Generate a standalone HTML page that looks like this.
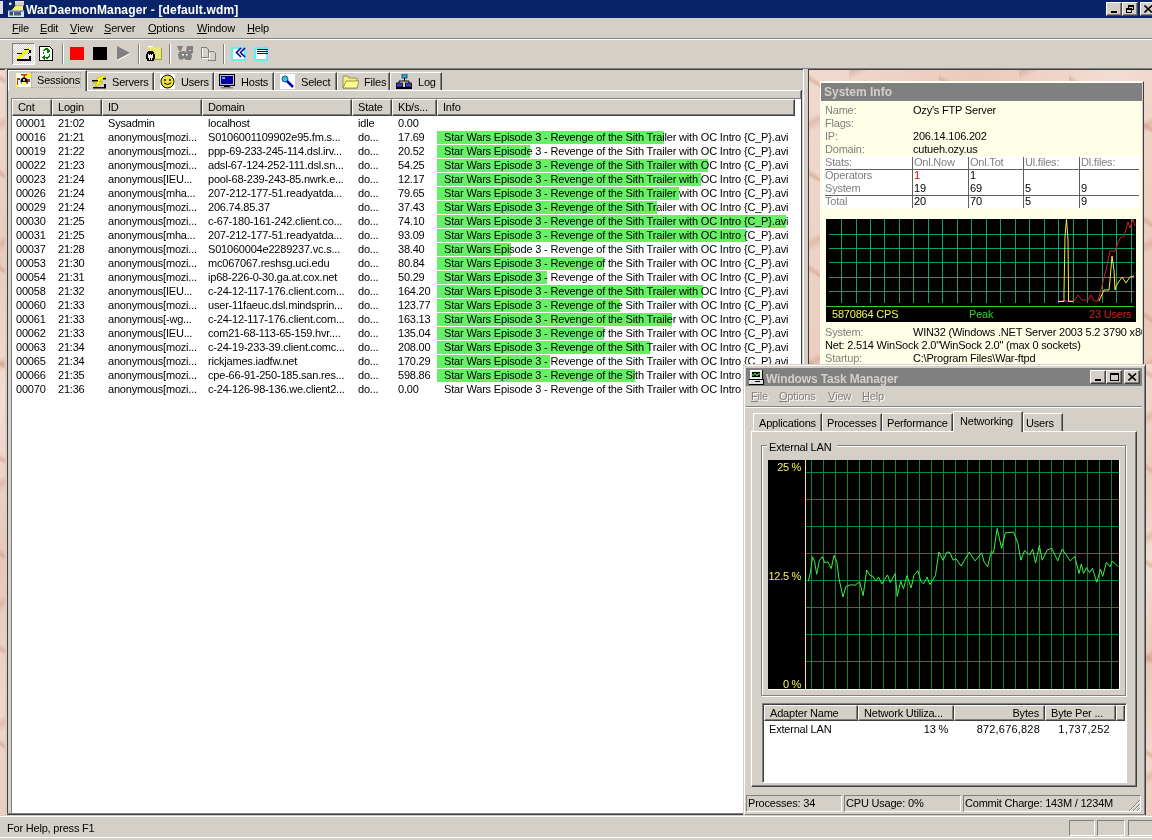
<!DOCTYPE html>
<html><head><meta charset="utf-8"><style>
html,body{margin:0;padding:0}
body{width:1152px;height:840px;position:relative;overflow:hidden;background:#d4d0c8;font:11px "Liberation Sans",sans-serif;color:#000}
div{position:absolute;box-sizing:border-box}
.t{white-space:nowrap;line-height:13px;letter-spacing:-0.2px;will-change:transform}
u{text-decoration:none;border-bottom:1px solid currentColor;line-height:10px;display:inline-block}
.pink{background:linear-gradient(32deg,transparent 47%,rgba(200,140,120,.45) 49%,transparent 52%) 0 0/130px 95px,linear-gradient(152deg,transparent 46%,rgba(200,140,120,.35) 49%,transparent 53%) 40px 20px/170px 120px,linear-gradient(115deg,#f2dacf 0%,#ebcabb 25%,#f3ddd2 45%,#e9c6b6 65%,#f1d6ca 85%,#ecccbe 100%)}
.raised{border-top:1px solid #fff;border-left:1px solid #fff;border-right:1px solid #404040;border-bottom:1px solid #404040;box-shadow:inset -1px -1px 0 #808080}
.hdr{background:#d4d0c8;border-top:1px solid #fff;border-left:1px solid #fff;border-right:1px solid #404040;border-bottom:1px solid #404040;box-shadow:inset -1px -1px 0 #808080}
</style></head><body>

<div style="left:0px;top:0px;width:1152px;height:18px;background:#0a246a"></div>
<div style="left:0px;top:1px;width:3px;height:13px;background:#e4dcdc"></div>
<svg style="position:absolute;left:8px;top:1px" width="16" height="16" viewBox="0 0 16 16"><rect x="7" y="0" width="9" height="4.5" fill="#d0d0c8"/><rect x="7" y="0" width="9" height="1" fill="#e8e8e0"/><polygon points="3,9.5 7,4.5 15,4.5 15,9.5" fill="#f0f070"/><path d="M7 4.5L3 9.5" stroke="#101830" stroke-width="1"/><rect x="0" y="9.5" width="16" height="6.5" fill="#d0e4f4"/><rect x="1" y="10" width="14" height="1" fill="#8080c0"/><rect x="1.5" y="11" width="3.5" height="3.5" fill="#405060"/><rect x="6" y="11" width="7" height="3.5" fill="#506070"/><circle cx="2.3" cy="2.8" r="1.4" fill="#fff"/></svg>
<div class="t" style="left:26px;top:4px;color:#fff;font-weight:bold;font-size:12px;letter-spacing:0.15px">WarDaemonManager - [default.wdm]</div>
<div style="left:1106px;top:2px;width:16px;height:14px;background:#d4d0c8;border-top:1px solid #fff;border-left:1px solid #fff;border-right:1px solid #404040;border-bottom:1px solid #404040;box-shadow:inset -1px -1px 0 #808080"><div style="left:4px;top:8px;width:6px;height:2px;background:#000"></div></div>
<div style="left:1122px;top:2px;width:16px;height:14px;background:#d4d0c8;border-top:1px solid #fff;border-left:1px solid #fff;border-right:1px solid #404040;border-bottom:1px solid #404040;box-shadow:inset -1px -1px 0 #808080"><div style="left:5px;top:2px;width:6px;height:5px;border:1px solid #000;border-top-width:2px"></div><div style="left:3px;top:5px;width:6px;height:5px;border:1px solid #000;border-top-width:2px;background:#d4d0c8"></div></div>
<div style="left:1140px;top:2px;width:16px;height:14px;background:#d4d0c8;border-top:1px solid #fff;border-left:1px solid #fff;border-right:1px solid #404040;border-bottom:1px solid #404040;box-shadow:inset -1px -1px 0 #808080"><svg style="position:absolute;left:3px;top:2px" width="9" height="8"><path d="M0.5 0.5L8 7.5M8 0.5L0.5 7.5" stroke="#000" stroke-width="1.6"/></svg></div>
<div class="t" style="left:12px;top:22px"><u>F</u>ile</div>
<div class="t" style="left:40px;top:22px"><u>E</u>dit</div>
<div class="t" style="left:70px;top:22px"><u>V</u>iew</div>
<div class="t" style="left:104px;top:22px"><u>S</u>erver</div>
<div class="t" style="left:148px;top:22px"><u>O</u>ptions</div>
<div class="t" style="left:197px;top:22px"><u>W</u>indow</div>
<div class="t" style="left:247px;top:22px"><u>H</u>elp</div>
<div style="left:0px;top:38px;width:1152px;height:1px;background:#808080"></div>
<div style="left:0px;top:39px;width:1152px;height:1px;background:#fff"></div>
<div style="left:12px;top:43px;width:23px;height:22px;border-top:1px solid #808080;border-left:1px solid #808080;border-right:1px solid #fff;border-bottom:1px solid #fff;background:repeating-conic-gradient(#fff 0 25%,#d4d0c8 0 50%) 0 0/2px 2px"></div>
<svg style="position:absolute;left:16px;top:47px" width="16" height="14" viewBox="0 0 16 14"><polygon points="0,12 7,4 9,4 12,0 14,1 11,5 12,5 4,12" fill="#f8f800"/><g shape-rendering="crispEdges" fill="#000"><rect x="1" y="6" width="5" height="1"/><rect x="8" y="2" width="5" height="1"/><rect x="13" y="3" width="2" height="3"/><rect x="12" y="6" width="1" height="1"/><rect x="1" y="12" width="14" height="1.5"/><rect x="13" y="9" width="2" height="4"/></g></svg>
<svg style="position:absolute;left:39px;top:46px" width="15" height="15" viewBox="0 0 15 15" shape-rendering="crispEdges"><path d="M0.5 0.5H10.5L13.5 3.5V14.5H0.5Z" fill="#fff" stroke="#000" stroke-width="1"/><g fill="#008000"><rect x="6" y="2" width="2" height="1"/><rect x="5" y="3" width="4" height="1"/><rect x="9" y="3" width="1" height="4"/><rect x="8" y="2" width="1" height="5"/><rect x="10" y="4" width="1" height="2"/><rect x="4" y="4" width="2" height="1"/><rect x="4" y="6" width="1" height="2"/><rect x="10" y="8" width="1" height="2"/><rect x="5" y="9" width="1" height="5"/><rect x="4" y="10" width="1" height="3"/><rect x="3" y="11" width="1" height="1"/><rect x="6" y="11" width="4" height="1"/><rect x="7" y="12" width="2" height="1"/><rect x="9" y="10" width="2" height="1"/></g></svg>
<div style="left:62px;top:44px;width:1px;height:20px;background:#808080;box-shadow:1px 0 0 #fff"></div>
<div style="left:70px;top:47px;width:14px;height:13px;background:#ff0000"></div>
<div style="left:93px;top:47px;width:14px;height:13px;background:#000"></div>
<svg style="position:absolute;left:117px;top:46px" width="14" height="15"><polygon points="0,0 13,7 0,14" fill="#808080"/><path d="M0 14.5L13 7.5" stroke="#fff" stroke-width="1"/></svg>
<div style="left:138px;top:44px;width:1px;height:20px;background:#808080;box-shadow:1px 0 0 #fff"></div>
<svg style="position:absolute;left:146px;top:45px" width="17" height="17" viewBox="0 0 17 17" shape-rendering="crispEdges"><rect x="2" y="1" width="5" height="2" fill="#fff"/><rect x="2" y="2" width="14" height="13" fill="#e8e878"/><rect x="15" y="3" width="1" height="12" fill="#a0a040"/><rect x="2" y="14" width="14" height="1" fill="#a0a040"/><g fill="#000"><rect x="2" y="6" width="5" height="1"/><rect x="1" y="7" width="7" height="9"/><rect x="0" y="9" width="9" height="5"/></g><rect x="2" y="9" width="5" height="4" fill="#f0f0d0"/><rect x="3" y="8" width="1" height="2" fill="#000"/><rect x="5" y="8" width="1" height="2" fill="#000"/><rect x="3" y="13" width="1" height="2" fill="#f0f0d0"/><rect x="5" y="13" width="1" height="2" fill="#f0f0d0"/></svg>
<div style="left:169px;top:44px;width:1px;height:20px;background:#808080;box-shadow:1px 0 0 #fff"></div>
<svg style="position:absolute;left:177px;top:46px" width="16" height="15" viewBox="0 0 16 15"><polygon points="0,0 6,0 3.5,6 1,3" fill="#808080"/><polygon points="10,0 16,0 16,7 13,8 9,5" fill="#808080"/><polygon points="2,6 6,5 10,6 14,7 15,10 14,14 9,14 7,12 5,14 2,13 1,9" fill="#808080"/><rect x="5" y="8" width="2" height="1.5" fill="#fff"/><rect x="9" y="8" width="1.5" height="1.5" fill="#fff"/><rect x="12" y="4" width="2" height="1" fill="#d4d0c8"/></svg>
<svg style="position:absolute;left:201px;top:46px" width="16" height="15" viewBox="0 0 16 15" shape-rendering="crispEdges"><path d="M0.5 1.5H5.5L7.5 3.5V11.5H0.5Z M7.5 5.5H12.5L14.5 7.5V14.5H7.5Z" fill="none" stroke="#808080" stroke-width="1"/><path d="M1 12.5H8M1.5 2V11M8.5 15H15.5M8.5 6.5V14" stroke="#fff"/></svg>
<div style="left:223px;top:44px;width:1px;height:20px;background:#808080;box-shadow:1px 0 0 #fff"></div>
<svg style="position:absolute;left:231px;top:47px" width="17" height="14" viewBox="0 0 17 14"><rect x="1" y="1" width="13" height="12" fill="#fff" stroke="#60f0f0" stroke-width="2" shape-rendering="crispEdges"/><path d="M10 1L5.5 5.5L10 10M14 1L9.5 5.5L14 10" fill="none" stroke="#0000c0" stroke-width="1.6"/></svg>
<svg style="position:absolute;left:254px;top:47px" width="15" height="14" viewBox="0 0 15 14" shape-rendering="crispEdges"><rect x="1" y="1" width="12" height="12" fill="#fff" stroke="#60f0f0" stroke-width="2"/><g fill="#0000c0"><rect x="3" y="2" width="11" height="1"/><rect x="3" y="4" width="11" height="1"/><rect x="3" y="6" width="11" height="1"/></g></svg>
<div style="left:0px;top:68px;width:1152px;height:1px;background:#808080"></div>
<div style="left:0px;top:69px;width:1152px;height:1px;background:#404040"></div>
<div class="pink" style="left:0px;top:70px;width:5px;height:746px;"></div>
<div style="left:5px;top:69px;width:2px;height:747px;background:#d4d0c8"></div>
<div style="left:7px;top:69px;width:1px;height:746px;background:#404040"></div>
<div style="left:7px;top:814px;width:800px;height:1px;background:#404040"></div>
<div style="left:8px;top:70px;width:796px;height:744px;background:#d4d0c8"></div>
<div style="left:803px;top:69px;width:1px;height:746px;background:#fff"></div>
<div style="left:804px;top:69px;width:4px;height:747px;background:#d4d0c8"></div>
<div style="left:808px;top:69px;width:344px;height:1px;background:#404040"></div>
<div style="left:808px;top:69px;width:1px;height:746px;background:#404040"></div>
<div class="pink" style="left:809px;top:70px;width:343px;height:745px;"></div>
<div style="left:8px;top:90px;width:794px;height:1px;background:#fff"></div>
<div style="left:801px;top:90px;width:1px;height:725px;background:#404040"></div>
<div style="left:800px;top:91px;width:1px;height:724px;background:#808080"></div>
<div style="left:87px;top:72px;width:67px;height:18px;background:#d4d0c8;border-top:1px solid #fff;border-left:1px solid #fff;border-right:1px solid #404040;box-shadow:inset -1px 0 0 #808080"></div>
<svg style="position:absolute;left:91px;top:76px" width="16" height="13" viewBox="0 0 16 13"><polygon points="9,0 15,0 8,6 12,6 3,12 6,7 2,7" fill="#ffff00" stroke="#909000" stroke-width="0.5"/><rect x="1" y="4" width="6" height="1.5" fill="#000"/><rect x="12" y="2" width="3" height="1.5" fill="#000"/><rect x="2" y="11" width="13" height="1.5" fill="#000"/><rect x="13" y="8" width="2" height="4" fill="#000"/></svg>
<div class="t" style="left:112px;top:76px;">Servers</div>
<div style="left:154px;top:72px;width:60px;height:18px;background:#d4d0c8;border-top:1px solid #fff;border-left:1px solid #fff;border-right:1px solid #404040;box-shadow:inset -1px 0 0 #808080"></div>
<svg style="position:absolute;left:160px;top:74px" width="15" height="15" viewBox="0 0 15 15"><rect width="15" height="15" fill="#fff"/><circle cx="7.5" cy="7.5" r="6.5" fill="#e8e040" stroke="#000" stroke-width="1"/><circle cx="5" cy="6" r="0.9" fill="#000"/><circle cx="10" cy="6" r="0.9" fill="#000"/><path d="M4 9Q7.5 12 11 9" fill="none" stroke="#000"/></svg>
<div class="t" style="left:181px;top:76px;">Users</div>
<div style="left:214px;top:72px;width:60px;height:18px;background:#d4d0c8;border-top:1px solid #fff;border-left:1px solid #fff;border-right:1px solid #404040;box-shadow:inset -1px 0 0 #808080"></div>
<svg style="position:absolute;left:219px;top:74px" width="16" height="15" viewBox="0 0 16 15"><rect x="0.5" y="0.5" width="15" height="11" fill="#c0c0c0" stroke="#000"/><rect x="2" y="2" width="12" height="8" fill="#0000a0"/><rect x="3" y="3" width="3" height="2" fill="#80a0ff"/><rect x="5" y="12" width="6" height="2" fill="#000"/><rect x="2" y="13" width="12" height="1.5" fill="#808080"/></svg>
<div class="t" style="left:241px;top:76px;">Hosts</div>
<div style="left:274px;top:72px;width:63px;height:18px;background:#d4d0c8;border-top:1px solid #fff;border-left:1px solid #fff;border-right:1px solid #404040;box-shadow:inset -1px 0 0 #808080"></div>
<svg style="position:absolute;left:280px;top:74px" width="15" height="15" viewBox="0 0 15 15"><rect width="15" height="15" fill="#fff"/><circle cx="5" cy="5" r="3" fill="#40c0e0" stroke="#006080"/><path d="M7 7L13 13" stroke="#0000a0" stroke-width="2.5"/></svg>
<div class="t" style="left:301px;top:76px;">Select</div>
<div style="left:337px;top:72px;width:53px;height:18px;background:#d4d0c8;border-top:1px solid #fff;border-left:1px solid #fff;border-right:1px solid #404040;box-shadow:inset -1px 0 0 #808080"></div>
<svg style="position:absolute;left:342px;top:74px" width="17" height="15" viewBox="0 0 17 15"><path d="M1 2H6L7 4H15V14H1Z" fill="#f0f080" stroke="#808040" stroke-width="0.8"/><path d="M1 14L4 7H17L15 14Z" fill="#ffff90" stroke="#808040" stroke-width="0.8"/></svg>
<div class="t" style="left:364px;top:76px;">Files</div>
<div style="left:390px;top:72px;width:52px;height:18px;background:#d4d0c8;border-top:1px solid #fff;border-left:1px solid #fff;border-right:1px solid #404040;box-shadow:inset -1px 0 0 #808080"></div>
<svg style="position:absolute;left:396px;top:74px" width="16" height="15" viewBox="0 0 16 15"><rect x="6" y="0" width="5" height="4" fill="#40a0c0" stroke="#004080" stroke-width="0.8"/><path d="M8.5 4V7M3 7H13V9M3 7V9" stroke="#000" fill="none"/><rect x="0.5" y="9" width="6" height="4" fill="#4040c0" stroke="#000" stroke-width="0.8"/><rect x="9.5" y="9" width="6" height="4" fill="#4040c0" stroke="#000" stroke-width="0.8"/><rect x="0" y="13" width="16" height="2" fill="#000"/></svg>
<div class="t" style="left:418px;top:76px;">Log</div>
<div style="left:8px;top:70px;width:79px;height:21px;background:#d4d0c8;border-top:1px solid #fff;border-left:1px solid #fff;border-right:1px solid #404040;box-shadow:inset -1px 0 0 #808080"></div>
<div style="left:31px;top:72px;width:50px;height:16px;border:1px dotted #a8a8a8"></div>
<svg style="position:absolute;left:16px;top:73px" width="15" height="14" viewBox="0 0 15 14"><rect x="0" y="0" width="15" height="14" fill="#fff"/><path d="M0 9Q0 14 6 14L0 14Z" fill="#ffff00"/><rect x="10" y="0" width="5" height="5" fill="#ffff00"/><rect x="5" y="1" width="6" height="1.5" fill="#c03000"/><rect x="7.5" y="1" width="1.5" height="4" fill="#c03000"/><path d="M1 5H4V7H2V12H1Z M11 6H14V9H12V11H11Z" fill="#c03000"/><circle cx="8" cy="8" r="3.5" fill="#000"/><rect x="5.5" y="9" width="5" height="3" fill="#ffff80"/><circle cx="8" cy="7" r="1" fill="#fff"/></svg>
<div class="t" style="left:37px;top:74px;">Sessions</div>
<div style="left:11px;top:98px;width:790px;height:717px;background:#fff"></div>
<div style="left:11px;top:98px;width:790px;height:1px;background:#808080"></div>
<div style="left:11px;top:98px;width:1px;height:717px;background:#808080"></div>
<div style="left:7px;top:813px;width:796px;height:1px;background:#808080"></div>
<div style="left:7px;top:814px;width:796px;height:1px;background:#404040"></div>
<div class="hdr" style="left:12px;top:99px;width:40px;height:17px;"></div>
<div class="t" style="left:18px;top:101px;">Cnt</div>
<div class="hdr" style="left:52px;top:99px;width:50px;height:17px;"></div>
<div class="t" style="left:58px;top:101px;">Login</div>
<div class="hdr" style="left:102px;top:99px;width:100px;height:17px;"></div>
<div class="t" style="left:108px;top:101px;">ID</div>
<div class="hdr" style="left:202px;top:99px;width:150px;height:17px;"></div>
<div class="t" style="left:208px;top:101px;">Domain</div>
<div class="hdr" style="left:352px;top:99px;width:40px;height:17px;"></div>
<div class="t" style="left:358px;top:101px;">State</div>
<div class="hdr" style="left:392px;top:99px;width:45px;height:17px;"></div>
<div class="t" style="left:398px;top:101px;">Kb/s...</div>
<div class="hdr" style="left:437px;top:99px;width:358px;height:17px;"></div>
<div class="t" style="left:443px;top:101px;">Info</div>
<div class="t" style="left:16px;top:117px;">00001</div>
<div class="t" style="left:58px;top:117px;">21:02</div>
<div class="t" style="left:108px;top:117px;">Sysadmin</div>
<div class="t" style="left:208px;top:117px;">localhost</div>
<div class="t" style="left:358px;top:117px;">idle</div>
<div class="t" style="left:398px;top:117px;">0.00</div>
<div style="left:437px;top:131px;width:227px;height:13px;background:#66f066"></div>
<div class="t" style="left:16px;top:131px;">00016</div>
<div class="t" style="left:58px;top:131px;">21:21</div>
<div class="t" style="left:108px;top:131px;">anonymous[mozi...</div>
<div class="t" style="left:208px;top:131px;">S0106001109902e95.fm.s...</div>
<div class="t" style="left:358px;top:131px;">do...</div>
<div class="t" style="left:398px;top:131px;">17.69</div>
<div class="t" style="left:444px;top:131px;letter-spacing:-0.17px">Star Wars Episode 3 - Revenge of the Sith Trailer with OC Intro {C_P}.avi</div>
<div style="left:437px;top:145px;width:93px;height:13px;background:#66f066"></div>
<div class="t" style="left:16px;top:145px;">00019</div>
<div class="t" style="left:58px;top:145px;">21:22</div>
<div class="t" style="left:108px;top:145px;">anonymous[mozi...</div>
<div class="t" style="left:208px;top:145px;">ppp-69-233-245-114.dsl.irv...</div>
<div class="t" style="left:358px;top:145px;">do...</div>
<div class="t" style="left:398px;top:145px;">20.52</div>
<div class="t" style="left:444px;top:145px;letter-spacing:-0.17px">Star Wars Episode 3 - Revenge of the Sith Trailer with OC Intro {C_P}.avi</div>
<div style="left:437px;top:159px;width:271px;height:13px;background:#66f066"></div>
<div class="t" style="left:16px;top:159px;">00022</div>
<div class="t" style="left:58px;top:159px;">21:23</div>
<div class="t" style="left:108px;top:159px;">anonymous[mozi...</div>
<div class="t" style="left:208px;top:159px;">adsl-67-124-252-111.dsl.sn...</div>
<div class="t" style="left:358px;top:159px;">do...</div>
<div class="t" style="left:398px;top:159px;">54.25</div>
<div class="t" style="left:444px;top:159px;letter-spacing:-0.17px">Star Wars Episode 3 - Revenge of the Sith Trailer with OC Intro {C_P}.avi</div>
<div style="left:437px;top:173px;width:264px;height:13px;background:#66f066"></div>
<div class="t" style="left:16px;top:173px;">00023</div>
<div class="t" style="left:58px;top:173px;">21:24</div>
<div class="t" style="left:108px;top:173px;">anonymous[IEU...</div>
<div class="t" style="left:208px;top:173px;">pool-68-239-243-85.nwrk.e...</div>
<div class="t" style="left:358px;top:173px;">do...</div>
<div class="t" style="left:398px;top:173px;">12.17</div>
<div class="t" style="left:444px;top:173px;letter-spacing:-0.17px">Star Wars Episode 3 - Revenge of the Sith Trailer with OC Intro {C_P}.avi</div>
<div style="left:437px;top:187px;width:242px;height:13px;background:#66f066"></div>
<div class="t" style="left:16px;top:187px;">00026</div>
<div class="t" style="left:58px;top:187px;">21:24</div>
<div class="t" style="left:108px;top:187px;">anonymous[mha...</div>
<div class="t" style="left:208px;top:187px;">207-212-177-51.readyatda...</div>
<div class="t" style="left:358px;top:187px;">do...</div>
<div class="t" style="left:398px;top:187px;">79.65</div>
<div class="t" style="left:444px;top:187px;letter-spacing:-0.17px">Star Wars Episode 3 - Revenge of the Sith Trailer with OC Intro {C_P}.avi</div>
<div style="left:437px;top:201px;width:220px;height:13px;background:#66f066"></div>
<div class="t" style="left:16px;top:201px;">00029</div>
<div class="t" style="left:58px;top:201px;">21:24</div>
<div class="t" style="left:108px;top:201px;">anonymous[mozi...</div>
<div class="t" style="left:208px;top:201px;">206.74.85.37</div>
<div class="t" style="left:358px;top:201px;">do...</div>
<div class="t" style="left:398px;top:201px;">37.43</div>
<div class="t" style="left:444px;top:201px;letter-spacing:-0.17px">Star Wars Episode 3 - Revenge of the Sith Trailer with OC Intro {C_P}.avi</div>
<div style="left:437px;top:215px;width:349px;height:13px;background:#66f066"></div>
<div class="t" style="left:16px;top:215px;">00030</div>
<div class="t" style="left:58px;top:215px;">21:25</div>
<div class="t" style="left:108px;top:215px;">anonymous[mozi...</div>
<div class="t" style="left:208px;top:215px;">c-67-180-161-242.client.co...</div>
<div class="t" style="left:358px;top:215px;">do...</div>
<div class="t" style="left:398px;top:215px;">74.10</div>
<div class="t" style="left:444px;top:215px;letter-spacing:-0.17px">Star Wars Episode 3 - Revenge of the Sith Trailer with OC Intro {C_P}.avi</div>
<div style="left:437px;top:229px;width:309px;height:13px;background:#66f066"></div>
<div class="t" style="left:16px;top:229px;">00031</div>
<div class="t" style="left:58px;top:229px;">21:25</div>
<div class="t" style="left:108px;top:229px;">anonymous[mha...</div>
<div class="t" style="left:208px;top:229px;">207-212-177-51.readyatda...</div>
<div class="t" style="left:358px;top:229px;">do...</div>
<div class="t" style="left:398px;top:229px;">93.09</div>
<div class="t" style="left:444px;top:229px;letter-spacing:-0.17px">Star Wars Episode 3 - Revenge of the Sith Trailer with OC Intro {C_P}.avi</div>
<div style="left:437px;top:243px;width:74px;height:13px;background:#66f066"></div>
<div class="t" style="left:16px;top:243px;">00037</div>
<div class="t" style="left:58px;top:243px;">21:28</div>
<div class="t" style="left:108px;top:243px;">anonymous[mozi...</div>
<div class="t" style="left:208px;top:243px;">S01060004e2289237.vc.s...</div>
<div class="t" style="left:358px;top:243px;">do...</div>
<div class="t" style="left:398px;top:243px;">38.40</div>
<div class="t" style="left:444px;top:243px;letter-spacing:-0.17px">Star Wars Episode 3 - Revenge of the Sith Trailer with OC Intro {C_P}.avi</div>
<div style="left:437px;top:257px;width:167px;height:13px;background:#66f066"></div>
<div class="t" style="left:16px;top:257px;">00053</div>
<div class="t" style="left:58px;top:257px;">21:30</div>
<div class="t" style="left:108px;top:257px;">anonymous[mozi...</div>
<div class="t" style="left:208px;top:257px;">mc067067.reshsg.uci.edu</div>
<div class="t" style="left:358px;top:257px;">do...</div>
<div class="t" style="left:398px;top:257px;">80.84</div>
<div class="t" style="left:444px;top:257px;letter-spacing:-0.17px">Star Wars Episode 3 - Revenge of the Sith Trailer with OC Intro {C_P}.avi</div>
<div style="left:437px;top:271px;width:110px;height:13px;background:#66f066"></div>
<div class="t" style="left:16px;top:271px;">00054</div>
<div class="t" style="left:58px;top:271px;">21:31</div>
<div class="t" style="left:108px;top:271px;">anonymous[mozi...</div>
<div class="t" style="left:208px;top:271px;">ip68-226-0-30.ga.at.cox.net</div>
<div class="t" style="left:358px;top:271px;">do...</div>
<div class="t" style="left:398px;top:271px;">50.29</div>
<div class="t" style="left:444px;top:271px;letter-spacing:-0.17px">Star Wars Episode 3 - Revenge of the Sith Trailer with OC Intro {C_P}.avi</div>
<div style="left:437px;top:285px;width:266px;height:13px;background:#66f066"></div>
<div class="t" style="left:16px;top:285px;">00058</div>
<div class="t" style="left:58px;top:285px;">21:32</div>
<div class="t" style="left:108px;top:285px;">anonymous[IEU...</div>
<div class="t" style="left:208px;top:285px;">c-24-12-117-176.client.com...</div>
<div class="t" style="left:358px;top:285px;">do...</div>
<div class="t" style="left:398px;top:285px;">164.20</div>
<div class="t" style="left:444px;top:285px;letter-spacing:-0.17px">Star Wars Episode 3 - Revenge of the Sith Trailer with OC Intro {C_P}.avi</div>
<div style="left:437px;top:299px;width:183px;height:13px;background:#66f066"></div>
<div class="t" style="left:16px;top:299px;">00060</div>
<div class="t" style="left:58px;top:299px;">21:33</div>
<div class="t" style="left:108px;top:299px;">anonymous[mozi...</div>
<div class="t" style="left:208px;top:299px;">user-11faeuc.dsl.mindsprin...</div>
<div class="t" style="left:358px;top:299px;">do...</div>
<div class="t" style="left:398px;top:299px;">123.77</div>
<div class="t" style="left:444px;top:299px;letter-spacing:-0.17px">Star Wars Episode 3 - Revenge of the Sith Trailer with OC Intro {C_P}.avi</div>
<div style="left:437px;top:313px;width:235px;height:13px;background:#66f066"></div>
<div class="t" style="left:16px;top:313px;">00061</div>
<div class="t" style="left:58px;top:313px;">21:33</div>
<div class="t" style="left:108px;top:313px;">anonymous[-wg...</div>
<div class="t" style="left:208px;top:313px;">c-24-12-117-176.client.com...</div>
<div class="t" style="left:358px;top:313px;">do...</div>
<div class="t" style="left:398px;top:313px;">163.13</div>
<div class="t" style="left:444px;top:313px;letter-spacing:-0.17px">Star Wars Episode 3 - Revenge of the Sith Trailer with OC Intro {C_P}.avi</div>
<div style="left:437px;top:327px;width:167px;height:13px;background:#66f066"></div>
<div class="t" style="left:16px;top:327px;">00062</div>
<div class="t" style="left:58px;top:327px;">21:33</div>
<div class="t" style="left:108px;top:327px;">anonymous[IEU...</div>
<div class="t" style="left:208px;top:327px;">com21-68-113-65-159.hvr....</div>
<div class="t" style="left:358px;top:327px;">do...</div>
<div class="t" style="left:398px;top:327px;">135.04</div>
<div class="t" style="left:444px;top:327px;letter-spacing:-0.17px">Star Wars Episode 3 - Revenge of the Sith Trailer with OC Intro {C_P}.avi</div>
<div style="left:437px;top:341px;width:213px;height:13px;background:#66f066"></div>
<div class="t" style="left:16px;top:341px;">00063</div>
<div class="t" style="left:58px;top:341px;">21:34</div>
<div class="t" style="left:108px;top:341px;">anonymous[mozi...</div>
<div class="t" style="left:208px;top:341px;">c-24-19-233-39.client.comc...</div>
<div class="t" style="left:358px;top:341px;">do...</div>
<div class="t" style="left:398px;top:341px;">208.00</div>
<div class="t" style="left:444px;top:341px;letter-spacing:-0.17px">Star Wars Episode 3 - Revenge of the Sith Trailer with OC Intro {C_P}.avi</div>
<div style="left:437px;top:355px;width:113px;height:13px;background:#66f066"></div>
<div class="t" style="left:16px;top:355px;">00065</div>
<div class="t" style="left:58px;top:355px;">21:34</div>
<div class="t" style="left:108px;top:355px;">anonymous[mozi...</div>
<div class="t" style="left:208px;top:355px;">rickjames.iadfw.net</div>
<div class="t" style="left:358px;top:355px;">do...</div>
<div class="t" style="left:398px;top:355px;">170.29</div>
<div class="t" style="left:444px;top:355px;letter-spacing:-0.17px">Star Wars Episode 3 - Revenge of the Sith Trailer with OC Intro {C_P}.avi</div>
<div style="left:437px;top:369px;width:198px;height:13px;background:#66f066"></div>
<div class="t" style="left:16px;top:369px;">00066</div>
<div class="t" style="left:58px;top:369px;">21:35</div>
<div class="t" style="left:108px;top:369px;">anonymous[mozi...</div>
<div class="t" style="left:208px;top:369px;">cpe-66-91-250-185.san.res...</div>
<div class="t" style="left:358px;top:369px;">do...</div>
<div class="t" style="left:398px;top:369px;">598.86</div>
<div class="t" style="left:444px;top:369px;letter-spacing:-0.17px">Star Wars Episode 3 - Revenge of the Sith Trailer with OC Intro {C_P}.avi</div>
<div class="t" style="left:16px;top:383px;">00070</div>
<div class="t" style="left:58px;top:383px;">21:36</div>
<div class="t" style="left:108px;top:383px;">anonymous[mozi...</div>
<div class="t" style="left:208px;top:383px;">c-24-126-98-136.we.client2...</div>
<div class="t" style="left:358px;top:383px;">do...</div>
<div class="t" style="left:398px;top:383px;">0.00</div>
<div class="t" style="left:444px;top:383px;letter-spacing:-0.17px">Star Wars Episode 3 - Revenge of the Sith Trailer with OC Intro {C_P}.avi</div>
<div style="left:820px;top:81px;width:324px;height:284px;background:#ffffe8;border-top:1px solid #fff;border-left:1px solid #fff;border-right:1px solid #404040;box-shadow:inset -1px 0 0 #d4d0c8"></div>
<div style="left:821px;top:83px;width:321px;height:18px;background:#808080"></div>
<div class="t" style="left:824px;top:86px;color:#d4d0c8;font-weight:bold;font-size:12px;letter-spacing:0">System Info</div>
<div class="t" style="left:825px;top:104px;color:#808080">Name:</div>
<div class="t" style="left:913px;top:104px;">Ozy's FTP Server</div>
<div class="t" style="left:825px;top:117px;color:#808080">Flags:</div>
<div class="t" style="left:825px;top:130px;color:#808080">IP:</div>
<div class="t" style="left:913px;top:130px;">206.14.106.202</div>
<div class="t" style="left:825px;top:143px;color:#808080">Domain:</div>
<div class="t" style="left:913px;top:143px;">cutueh.ozy.us</div>
<div style="left:823px;top:156px;width:316px;height:52px;background:#fff"></div>
<div style="left:912px;top:157px;width:1px;height:51px;background:#606060"></div>
<div style="left:968px;top:157px;width:1px;height:51px;background:#606060"></div>
<div style="left:1023px;top:157px;width:1px;height:51px;background:#606060"></div>
<div style="left:1079px;top:157px;width:1px;height:51px;background:#606060"></div>
<div style="left:825px;top:169px;width:314px;height:1px;background:#606060"></div>
<div style="left:825px;top:195px;width:314px;height:1px;background:#606060"></div>
<div class="t" style="left:825px;top:156px;color:#808080">Stats:</div>
<div class="t" style="left:914px;top:156px;color:#808080">Onl.Now</div>
<div class="t" style="left:970px;top:156px;color:#808080">Onl.Tot</div>
<div class="t" style="left:1025px;top:156px;color:#808080">Ul.files:</div>
<div class="t" style="left:1081px;top:156px;color:#808080">Dl.files:</div>
<div class="t" style="left:825px;top:169px;color:#808080">Operators</div>
<div class="t" style="left:914px;top:169px;color:#d00000">1</div>
<div class="t" style="left:970px;top:169px;">1</div>
<div class="t" style="left:825px;top:182px;color:#808080">System</div>
<div class="t" style="left:914px;top:182px;">19</div>
<div class="t" style="left:970px;top:182px;">69</div>
<div class="t" style="left:1025px;top:182px;">5</div>
<div class="t" style="left:1081px;top:182px;">9</div>
<div class="t" style="left:825px;top:195px;color:#808080">Total</div>
<div class="t" style="left:914px;top:195px;">20</div>
<div class="t" style="left:970px;top:195px;">70</div>
<div class="t" style="left:1025px;top:195px;">5</div>
<div class="t" style="left:1081px;top:195px;">9</div>
<svg style="position:absolute;left:826px;top:219px" width="310" height="103"><rect width="310" height="103" fill="#000"/><rect x="15" y="0" width="1" height="84" fill="#10a070"/><rect x="30" y="0" width="1" height="84" fill="#10a070"/><rect x="44" y="0" width="1" height="84" fill="#10a070"/><rect x="58" y="0" width="1" height="84" fill="#10a070"/><rect x="73" y="0" width="1" height="84" fill="#10a070"/><rect x="87" y="0" width="1" height="84" fill="#10a070"/><rect x="102" y="0" width="1" height="84" fill="#10a070"/><rect x="116" y="0" width="1" height="84" fill="#10a070"/><rect x="131" y="0" width="1" height="84" fill="#10a070"/><rect x="145" y="0" width="1" height="84" fill="#10a070"/><rect x="160" y="0" width="1" height="84" fill="#10a070"/><rect x="174" y="0" width="1" height="84" fill="#10a070"/><rect x="189" y="0" width="1" height="84" fill="#10a070"/><rect x="203" y="0" width="1" height="84" fill="#10a070"/><rect x="218" y="0" width="1" height="84" fill="#10a070"/><rect x="232" y="0" width="1" height="84" fill="#10a070"/><rect x="247" y="0" width="1" height="84" fill="#10a070"/><rect x="261" y="0" width="1" height="84" fill="#10a070"/><rect x="276" y="0" width="1" height="84" fill="#10a070"/><rect x="290" y="0" width="1" height="84" fill="#10a070"/><rect x="305" y="0" width="1" height="84" fill="#10a070"/><rect x="3" y="15" width="305" height="1" fill="#10a070"/><rect x="3" y="29" width="305" height="1" fill="#10a070"/><rect x="3" y="43" width="305" height="1" fill="#10a070"/><rect x="3" y="58" width="305" height="1" fill="#10a070"/><rect x="3" y="72" width="305" height="1" fill="#10a070"/><rect x="0" y="87" width="308" height="1" fill="#30d030"/><polyline points="232,82 248,82 252,76 256,81 262,81 265,76 268,82 272,82 280,51 284,32 289,32 294,19 298,17 302,3 304,9 307,0 309,7" fill="none" stroke="#d02020" stroke-width="1"/><polyline points="232,82.5 238,82.5 238,73 239,17 240.5,0 242,21 242.5,73 242.5,82.5 247,82.5" fill="none" stroke="#f0f040" stroke-width="1"/><polyline points="273,82 278,71 283,71 284,61 286,37 288,51 289,71 290,67 296,58 300,64 304,58 308,57" fill="none" stroke="#f0f040" stroke-width="1"/></svg>
<div class="t" style="left:832px;top:308px;color:#f0f060">5870864 CPS</div>
<div class="t" style="left:969px;top:308px;color:#30d030">Peak</div>
<div class="t" style="left:1089px;top:308px;color:#d02020">23 Users</div>
<div class="t" style="left:825px;top:326px;color:#808080">System:</div>
<div class="t" style="left:913px;top:326px;width:229px;overflow:hidden">WIN32 (Windows .NET Server 2003 5.2 3790 x86)</div>
<div class="t" style="left:825px;top:339px;">Net: 2.514 WinSock 2.0"WinSock 2.0" (max 0 sockets)</div>
<div class="t" style="left:825px;top:352px;color:#808080">Startup:</div>
<div class="t" style="left:913px;top:352px;">C:\Program Files\War-ftpd</div>
<div style="left:743px;top:364px;width:403px;height:452px;background:#d4d0c8;border-top:1px solid #d4d0c8;border-left:1px solid #d4d0c8;border-right:1px solid #404040;border-bottom:1px solid #404040;box-shadow:inset 1px 1px 0 #fff,inset -1px -1px 0 #808080"></div>
<div style="left:746px;top:368px;width:396px;height:18px;background:#808080"></div>
<svg style="position:absolute;left:749px;top:368px" width="17" height="18" viewBox="0 0 17 18" shape-rendering="crispEdges"><rect x="1" y="2" width="12" height="9" fill="#e8e8e8"/><rect x="1" y="2" width="12" height="1" fill="#fff"/><rect x="1" y="2" width="1" height="9" fill="#fff"/><rect x="3" y="4" width="8" height="5" fill="#000"/><path d="M3 7H5L6 5L8 8L9 6H11" stroke="#40ff40" fill="none" stroke-width="1" shape-rendering="auto"/><rect x="13" y="2" width="1" height="9" fill="#000"/><rect x="0" y="11" width="14" height="5" fill="#e0e0e0"/><rect x="0" y="11" width="14" height="1" fill="#000"/><rect x="0" y="16" width="15" height="1" fill="#000"/><rect x="14" y="11" width="1" height="6" fill="#000"/><rect x="6" y="13" width="5" height="1" fill="#000"/></svg>
<div class="t" style="left:766px;top:373px;color:#d4d0c8;font-weight:bold;font-size:12px;letter-spacing:-0.15px">Windows Task Manager</div>
<div style="left:1090px;top:370px;width:16px;height:14px;background:#d4d0c8;border-top:1px solid #fff;border-left:1px solid #fff;border-right:1px solid #404040;border-bottom:1px solid #404040;box-shadow:inset -1px -1px 0 #808080"><div style="left:4px;top:8px;width:6px;height:2px;background:#000"></div></div>
<div style="left:1106px;top:370px;width:16px;height:14px;background:#d4d0c8;border-top:1px solid #fff;border-left:1px solid #fff;border-right:1px solid #404040;border-bottom:1px solid #404040;box-shadow:inset -1px -1px 0 #808080"><div style="left:3px;top:2px;width:9px;height:8px;border:1px solid #000;border-top-width:2px"></div></div>
<div style="left:1124px;top:370px;width:16px;height:14px;background:#d4d0c8;border-top:1px solid #fff;border-left:1px solid #fff;border-right:1px solid #404040;border-bottom:1px solid #404040;box-shadow:inset -1px -1px 0 #808080"><svg style="position:absolute;left:3px;top:2px" width="9" height="8"><path d="M0.5 0.5L8 7.5M8 0.5L0.5 7.5" stroke="#000" stroke-width="1.6"/></svg></div>
<div class="t" style="left:751px;top:390px;color:#808080;text-shadow:1px 1px 0 #fff"><u>F</u>ile</div>
<div class="t" style="left:779px;top:390px;color:#808080;text-shadow:1px 1px 0 #fff"><u>O</u>ptions</div>
<div class="t" style="left:828px;top:390px;color:#808080;text-shadow:1px 1px 0 #fff"><u>V</u>iew</div>
<div class="t" style="left:862px;top:390px;color:#808080;text-shadow:1px 1px 0 #fff"><u>H</u>elp</div>
<div style="left:746px;top:406px;width:396px;height:1px;background:#808080"></div>
<div style="left:746px;top:407px;width:396px;height:1px;background:#fff"></div>
<div style="left:751px;top:431px;width:386px;height:356px;background:#d4d0c8;border-top:1px solid #fff;border-left:1px solid #fff;border-right:1px solid #404040;border-bottom:1px solid #404040;box-shadow:inset -1px -1px 0 #808080"></div>
<div style="left:753px;top:413px;width:69px;height:18px;background:#d4d0c8;border-top:1px solid #fff;border-left:1px solid #fff;border-right:1px solid #404040;box-shadow:inset -1px 0 0 #808080"></div>
<div class="t" style="left:759px;top:417px;">Applications</div>
<div style="left:822px;top:413px;width:60px;height:18px;background:#d4d0c8;border-top:1px solid #fff;border-left:1px solid #fff;border-right:1px solid #404040;box-shadow:inset -1px 0 0 #808080"></div>
<div class="t" style="left:827px;top:417px;">Processes</div>
<div style="left:882px;top:413px;width:71px;height:18px;background:#d4d0c8;border-top:1px solid #fff;border-left:1px solid #fff;border-right:1px solid #404040;box-shadow:inset -1px 0 0 #808080"></div>
<div class="t" style="left:887px;top:417px;">Performance</div>
<div style="left:1023px;top:413px;width:40px;height:18px;background:#d4d0c8;border-top:1px solid #fff;border-left:1px solid #fff;border-right:1px solid #404040;box-shadow:inset -1px 0 0 #808080"></div>
<div class="t" style="left:1026px;top:417px;">Users</div>
<div style="left:953px;top:411px;width:70px;height:21px;background:#d4d0c8;border-top:1px solid #fff;border-left:1px solid #fff;border-right:1px solid #404040;box-shadow:inset -1px 0 0 #808080"></div>
<div class="t" style="left:960px;top:415px;">Networking</div>
<div style="left:761px;top:445px;width:365px;height:251px;border:1px solid #808080;box-shadow:1px 1px 0 #fff inset, 1px 1px 0 #fff"></div>
<div style="left:767px;top:440px;width:70px;height:12px;background:#d4d0c8"></div>
<div class="t" style="left:769px;top:441px;">External LAN</div>
<svg style="position:absolute;left:768px;top:460px" width="352" height="230"><rect width="352" height="230" fill="#000"/><rect x="43" y="0" width="1" height="230" fill="#008848"/><rect x="55" y="0" width="1" height="230" fill="#008848"/><rect x="67" y="0" width="1" height="230" fill="#008848"/><rect x="79" y="0" width="1" height="230" fill="#008848"/><rect x="91" y="0" width="1" height="230" fill="#008848"/><rect x="103" y="0" width="1" height="230" fill="#008848"/><rect x="115" y="0" width="1" height="230" fill="#008848"/><rect x="127" y="0" width="1" height="230" fill="#008848"/><rect x="139" y="0" width="1" height="230" fill="#008848"/><rect x="151" y="0" width="1" height="230" fill="#008848"/><rect x="163" y="0" width="1" height="230" fill="#008848"/><rect x="175" y="0" width="1" height="230" fill="#008848"/><rect x="187" y="0" width="1" height="230" fill="#008848"/><rect x="199" y="0" width="1" height="230" fill="#008848"/><rect x="211" y="0" width="1" height="230" fill="#008848"/><rect x="223" y="0" width="1" height="230" fill="#008848"/><rect x="235" y="0" width="1" height="230" fill="#008848"/><rect x="247" y="0" width="1" height="230" fill="#008848"/><rect x="259" y="0" width="1" height="230" fill="#008848"/><rect x="271" y="0" width="1" height="230" fill="#008848"/><rect x="283" y="0" width="1" height="230" fill="#008848"/><rect x="295" y="0" width="1" height="230" fill="#008848"/><rect x="307" y="0" width="1" height="230" fill="#008848"/><rect x="319" y="0" width="1" height="230" fill="#008848"/><rect x="331" y="0" width="1" height="230" fill="#008848"/><rect x="343" y="0" width="1" height="230" fill="#008848"/><rect x="38" y="12" width="314" height="1" fill="#008848"/><rect x="38" y="39" width="314" height="1" fill="#008848"/><rect x="38" y="66" width="314" height="1" fill="#008848"/><rect x="38" y="93" width="314" height="1" fill="#008848"/><rect x="38" y="120" width="314" height="1" fill="#008848"/><rect x="38" y="147" width="314" height="1" fill="#008848"/><rect x="38" y="174" width="314" height="1" fill="#008848"/><rect x="38" y="201" width="314" height="1" fill="#008848"/><rect x="37" y="0" width="1" height="230" fill="#f0f040"/><polyline points="40.3,121.1 42.4,112.8 44.5,96.8 46.6,101.7 48.7,114.2 51.4,100.3 54.2,96.8 57.0,103.0 59.8,101.7 63.2,108.6 66.0,95.4 68.8,101.7 70.9,118.3 75.0,137.0 77.8,126.7 83.4,124.6 86.9,125.3 91.7,121.8 95.2,135.7 98.7,110.0 102.1,115.6 104.9,116.2 107.7,121.1 110.5,117.0 113.9,123.9 119.5,114.9 122.3,122.5 127.1,113.5 129.2,136.4 132.7,121.1 135.5,128.8 138.9,115.6 143.1,128.0 145.9,115.6 150.0,110.7 152.8,121.1 155.6,123.9 159.1,117.0 161.9,124.6 167.4,115.6 170.9,91.9 175.0,100.3 179.2,91.9 182.0,92.8 185.0,100.2 187.9,98.7 193.1,106.1 201.2,92.1 207.1,100.9 213.7,92.8 216.0,101.7 219.6,106.8 223.3,91.3 225.5,92.8 229.2,68.4 233.6,88.4 237.3,72.9 245.5,72.1 249.9,83.2 252.8,100.2 256.5,90.6 261.7,95.0 264.6,89.1 267.6,103.1 271.3,85.4 274.2,100.2 279.4,89.8 283.8,88.4 289.7,100.9 294.2,89.1 302.3,100.9 306.7,96.5 311.1,113.5 313.3,103.9 315.6,113.5 318.5,107.6 321.5,112.7 324.4,108.3 328.8,122.3 332.5,109.0 334.7,116.4 338.4,102.4 342.1,106.8 344.3,100.9 350.2,106.8" fill="none" stroke="#40f040" stroke-width="1"/></svg>
<div style="left:1119px;top:460px;width:1px;height:230px;background:#fff"></div>
<div style="left:768px;top:689px;width:352px;height:1px;background:#fff"></div>
<div class="t" style="left:740px;top:461px;color:#f0f060;letter-spacing:-0.3px;width:61px;text-align:right">25 %</div>
<div class="t" style="left:740px;top:570px;color:#f0f060;letter-spacing:-0.3px;width:61px;text-align:right">12.5 %</div>
<div class="t" style="left:740px;top:678px;color:#f0f060;letter-spacing:-0.3px;width:61px;text-align:right">0 %</div>
<div style="left:762px;top:703px;width:365px;height:80px;background:#fff;border-top:1px solid #808080;border-left:1px solid #808080;border-right:1px solid #fff;border-bottom:1px solid #fff;box-shadow:inset 1px 1px 0 #404040"></div>
<div class="hdr" style="left:764px;top:705px;width:94px;height:16px;"></div>
<div class="t" style="left:770px;top:707px;">Adapter Name</div>
<div class="hdr" style="left:858px;top:705px;width:96px;height:16px;"></div>
<div class="t" style="left:864px;top:707px;">Network Utiliza...</div>
<div class="hdr" style="left:954px;top:705px;width:91px;height:16px;"></div>
<div class="t" style="left:954px;top:707px;width:85px;text-align:right">Bytes</div>
<div class="hdr" style="left:1045px;top:705px;width:71px;height:16px;"></div>
<div class="t" style="left:1051px;top:707px;">Byte Per ...</div>
<div class="hdr" style="left:1116px;top:705px;width:9px;height:16px;"></div>
<div class="t" style="left:769px;top:723px;">External LAN</div>
<div class="t" style="left:858px;top:723px;width:90px;text-align:right">13 %</div>
<div class="t" style="left:954px;top:723px;width:86px;text-align:right;letter-spacing:0.2px">872,676,828</div>
<div class="t" style="left:1045px;top:723px;width:65px;text-align:right;letter-spacing:0.3px">1,737,252</div>
<div style="left:746px;top:795px;width:96px;height:17px;border-top:1px solid #808080;border-left:1px solid #808080;border-right:1px solid #fff;border-bottom:1px solid #fff"></div>
<div class="t" style="left:748px;top:797px;">Processes: 34</div>
<div style="left:844px;top:795px;width:117px;height:17px;border-top:1px solid #808080;border-left:1px solid #808080;border-right:1px solid #fff;border-bottom:1px solid #fff"></div>
<div class="t" style="left:846px;top:797px;">CPU Usage: 0%</div>
<div style="left:963px;top:795px;width:178px;height:17px;border-top:1px solid #808080;border-left:1px solid #808080;border-right:1px solid #fff;border-bottom:1px solid #fff"></div>
<div class="t" style="left:965px;top:797px;">Commit Charge: 143M / 1234M</div>
<svg style="position:absolute;left:1128px;top:799px" width="13" height="13"><path d="M12 1L1 12M12 5L5 12M12 9L9 12" stroke="#808080" stroke-width="1"/><path d="M12 2L2 12M12 6L6 12M12 10L10 12" stroke="#fff" stroke-width="1"/></svg>
<div class="pink" style="left:1146px;top:364px;width:6px;height:452px;"></div>
<div style="left:0px;top:815px;width:1152px;height:25px;background:#d4d0c8"></div>
<div style="left:0px;top:816px;width:1152px;height:1px;background:#fff"></div>
<div class="t" style="left:7px;top:822px;">For Help, press F1</div>
<div style="left:1069px;top:820px;width:26px;height:16px;border-top:1px solid #808080;border-left:1px solid #808080;border-right:1px solid #fff;border-bottom:1px solid #fff"></div>
<div style="left:1097px;top:820px;width:28px;height:16px;border-top:1px solid #808080;border-left:1px solid #808080;border-right:1px solid #fff;border-bottom:1px solid #fff"></div>
<div style="left:1128px;top:820px;width:30px;height:16px;border-top:1px solid #808080;border-left:1px solid #808080;border-right:1px solid #fff;border-bottom:1px solid #fff"></div>
<div style="left:0px;top:837px;width:1152px;height:1px;background:#fff"></div>
</body></html>
